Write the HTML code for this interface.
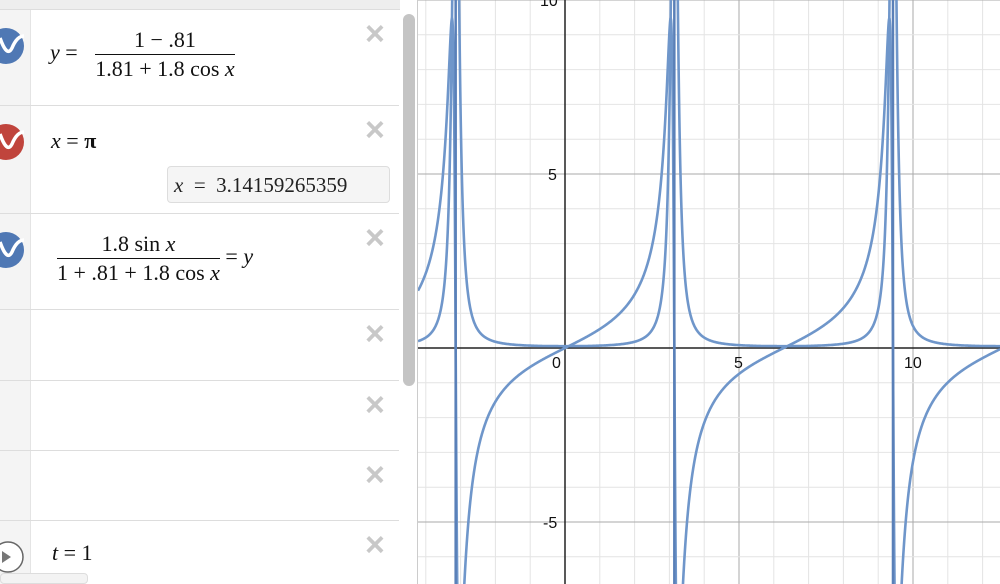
<!DOCTYPE html>
<html><head><meta charset="utf-8"><style>
*{margin:0;padding:0;box-sizing:border-box}
body{width:1000px;height:584px;overflow:hidden;background:#fff;font-family:"Liberation Serif",serif;position:relative}
#left{position:absolute;left:0;top:0;width:418px;height:584px;background:#fff;border-right:1px solid #ccc;overflow:hidden}
.top{position:absolute;left:0;top:0;width:400px;height:10px;background:#eee;border-bottom:1px solid #ddd}
.col{position:absolute;left:0;top:10px;width:31px;height:574px;background:#f4f4f4;border-right:1px solid #e4e4e4}
.sep{position:absolute;left:0;width:399px;height:1px;background:#ddd}
.x{position:absolute;left:365px;font-family:"Liberation Sans",sans-serif;font-size:34px;color:#c8c8c8;line-height:24px;font-weight:bold}
.ic{position:absolute;left:-12px;width:36px;height:36px;border-radius:50%}
.m{position:absolute;font-size:22px;color:#111;white-space:nowrap}
.fr{display:inline-block;vertical-align:middle;text-align:center}
.fr span{display:block;line-height:28px}
.fr .n{border-bottom:1.5px solid #111}
.val{position:absolute;left:167px;top:166px;width:223px;height:37px;background:#f5f5f5;border:1px solid #ddd;border-radius:4px;font-size:21px;padding:6px 0 0 6px;color:#222}
.sb{position:absolute;left:403px;top:14px;width:12px;height:372px;background:#c4c4c4;border-radius:6px}
svg{position:absolute;left:418px;top:0}
.lab{font-family:"Liberation Sans",sans-serif;font-size:16px;fill:#111}
</style></head><body>
<div id="left">
<div class="top"></div>
<div class="col"></div>
<div class="sep" style="top:105px"></div>
<div class="sep" style="top:213px"></div>
<div class="sep" style="top:309px"></div>
<div class="sep" style="top:380px"></div>
<div class="sep" style="top:450px"></div>
<div class="sep" style="top:520px"></div>
<div class="ic" style="top:28px;background:#4f78b4"></div>
<div class="ic" style="top:124px;background:#c0443c"></div>
<div class="ic" style="top:232px;background:#4f78b4"></div>
<svg style="left:0;top:0" width="31" height="584"><g fill="none" stroke="#fff" stroke-width="3.5"><path d="M0 38 Q7 58 12 48 Q17 36 24 36"/><path d="M0 134 Q7 154 12 144 Q17 132 24 132"/><path d="M0 242 Q7 262 12 252 Q17 240 24 240"/></g>
<circle cx="8" cy="557" r="15" fill="#fff" stroke="#666" stroke-width="1.5"/><path d="M2 551 L11 557 L2 563Z" fill="#777"/></svg>
<div class="x" style="top:22px">×</div><div class="x" style="top:118px">×</div><div class="x" style="top:226px">×</div><div class="x" style="top:322px">×</div><div class="x" style="top:393px">×</div><div class="x" style="top:463px">×</div><div class="x" style="top:533px">×</div>
<div class="m" style="left:50px;top:26px"><i>y</i> = <span class="fr" style="margin-left:12px"><span class="n">1 − .81</span><span>1.81 + 1.8 cos <i>x</i></span></span></div>
<div class="m" style="left:51px;top:128px"><i>x</i> = <b>π</b></div>
<div class="val"><i>x</i> &nbsp;= &nbsp;3.14159265359</div>
<div class="m" style="left:57px;top:230px"><span class="fr"><span class="n">1.8 sin <i>x</i></span><span>1 + .81 + 1.8 cos <i>x</i></span></span> = <i>y</i></div>
<div class="m" style="left:52px;top:540px"><i>t</i> = 1</div>
<div class="sb"></div>
<div style="position:absolute;left:0;top:573px;width:88px;height:11px;background:#f3f3f3;border:1px solid #ddd;border-radius:4px"></div>
</div>
<svg id="g" width="582" height="584"></svg>
<script>
var s=document.getElementById('g'),ox=565-418,oy=348,k=34.8,h='';
for(var i=-5;i<=13;i++){var x=ox+i*k;h+='<line x1="'+x+'" y1="0" x2="'+x+'" y2="584" stroke="'+(i%5==0?'#aaa':'#e4e4e4')+'" stroke-width="1"/>';}
for(var j=-7;j<=11;j++){var y=oy-j*k;h+='<line x1="0" y1="'+y+'" x2="582" y2="'+y+'" stroke="'+(j%5==0?'#aaa':'#e4e4e4')+'" stroke-width="1"/>';}
h+='<line x1="'+ox+'" y1="0" x2="'+ox+'" y2="584" stroke="#222" stroke-width="1.5"/><line x1="0" y1="'+oy+'" x2="582" y2="'+oy+'" stroke="#222" stroke-width="1.5"/>';
function P(f){var d='',pen=false;for(var px=0;px<=582;px+=0.25){var X=(px-ox)/k,Y=f(X);if(!isFinite(Y)||Math.abs(Y)>40){pen=false;continue;}var py=oy-Y*k;d+=(pen?'L':'M')+px.toFixed(2)+' '+py.toFixed(1);pen=true;}return d;}
var fs=[function(x){return .19/(1.81+1.8*Math.cos(x))},function(x){return 1.8*Math.sin(x)/(1.81+1.8*Math.cos(x))}];
fs.forEach(function(f){h+='<path d="'+P(f)+'" fill="none" stroke="#6f96ca" stroke-width="2.6"/>';});
[Math.PI,-Math.PI,3*Math.PI].forEach(function(a){var x=ox+a*k;h+='<line x1="'+x+'" y1="0" x2="'+x+'" y2="584" stroke="#5a80b8" stroke-width="2.5"/>';});
h+='<text class="lab" x="'+(ox-13)+'" y="368">0</text><text class="lab" x="'+(ox+5*k-5)+'" y="368">5</text><text class="lab" x="'+(ox+10*k-9)+'" y="368">10</text>';
h+='<text class="lab" x="'+(ox-17)+'" y="'+(oy-5*k+6)+'">5</text><text class="lab" x="'+(ox-22)+'" y="'+(oy+5*k+6)+'">-5</text><text class="lab" x="'+(ox-25)+'" y="'+(oy-10*k+6)+'">10</text>';
s.innerHTML=h;
</script>
</body></html>
